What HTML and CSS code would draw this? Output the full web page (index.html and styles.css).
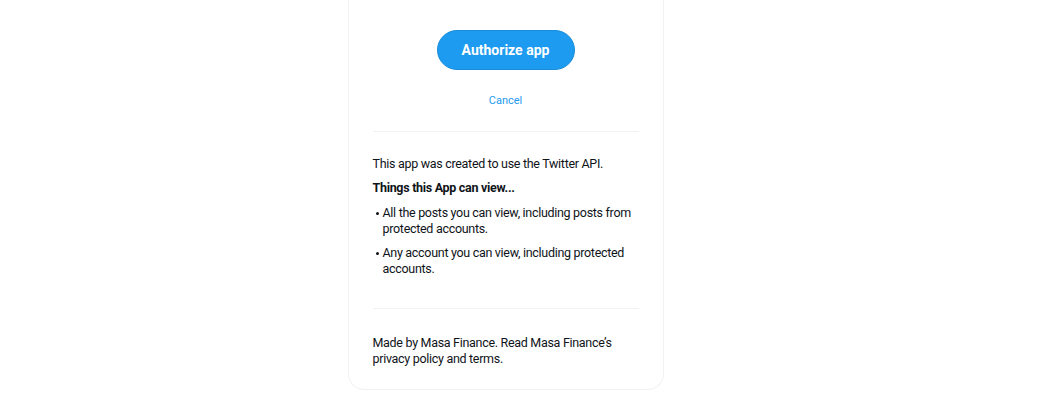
FILE: index.html
```html
<!DOCTYPE html>
<html>
<head>
<meta charset="utf-8">
<link rel="stylesheet" href="styles.css">
</head>
<body>
<main class="page">
  <section class="card">
    <div class="actions">
      <button class="authorize">Authorize app</button>
      <a class="cancel" href="#">Cancel</a>
    </div>
    <div class="info">
      <p class="lead">This app was created to use the Twitter API.</p>
      <p class="heading">Things this App can view...</p>
      <ul class="perms">
        <li>All the posts you can view, including posts from protected accounts.</li>
        <li>Any account you can view, including protected accounts.</li>
      </ul>
    </div>
    <div class="footer">
      <p>Made by Masa Finance. Read Masa Finance’s privacy policy and terms.</p>
    </div>
  </section>
</main>
</body>
</html>
```
FILE: styles.css
```css
* { box-sizing: border-box; }
html, body { margin: 0; padding: 0; background: #fff; }
body {
  font-family: Roboto, "Liberation Sans", sans-serif;
  color: #0f1419;
}
.page {
  display: flex;
  justify-content: center;
  padding-right: 39px;
}
.card {
  width: 316px;
  border: 1px solid #eff3f4;
  border-top: none;
  border-radius: 0 0 16px 16px;
  padding: 0 24px;
}
.actions {
  display: flex;
  flex-direction: column;
  align-items: center;
  padding-top: 30px;
  padding-bottom: 22px;
  border-bottom: 1px solid #eff3f4;
}
.authorize {
  width: 138px;
  height: 40px;
  border-radius: 20px;
  border: 1px solid #1a8cd8;
  background: #1d9bf0;
  color: #fff;
  font-family: Roboto, "Liberation Sans", sans-serif;
  font-weight: 700;
  font-size: 14px;
  padding: 0;
}
.cancel {
  margin-top: 23px;
  font-size: 11px;
  line-height: 16px;
  color: #1d9bf0;
  text-decoration: none;
}
.info {
  padding: 24px 0 31px;
  border-bottom: 1px solid #eff3f4;
  font-size: 12.5px;
  letter-spacing: -0.3px;
  line-height: 16px;
}
.info p { margin: 0; }
.heading {
  font-weight: 700;
  margin-top: 8px !important;
}
.perms {
  list-style: none;
  margin: 9px 0 0;
  padding: 0;
}
.perms li {
  position: relative;
  padding-left: 10px;
  margin-bottom: 8px;
}
.perms li::before {
  content: "";
  position: absolute;
  left: 3px;
  top: 7px;
  width: 3px;
  height: 3px;
  border-radius: 50%;
  background: #0f1419;
}
.perms li:last-child { margin-bottom: 0; }
.footer {
  padding: 26px 0 22px;
  font-size: 12.5px;
  letter-spacing: -0.3px;
  line-height: 16px;
}
.footer p { margin: 0; }
```
